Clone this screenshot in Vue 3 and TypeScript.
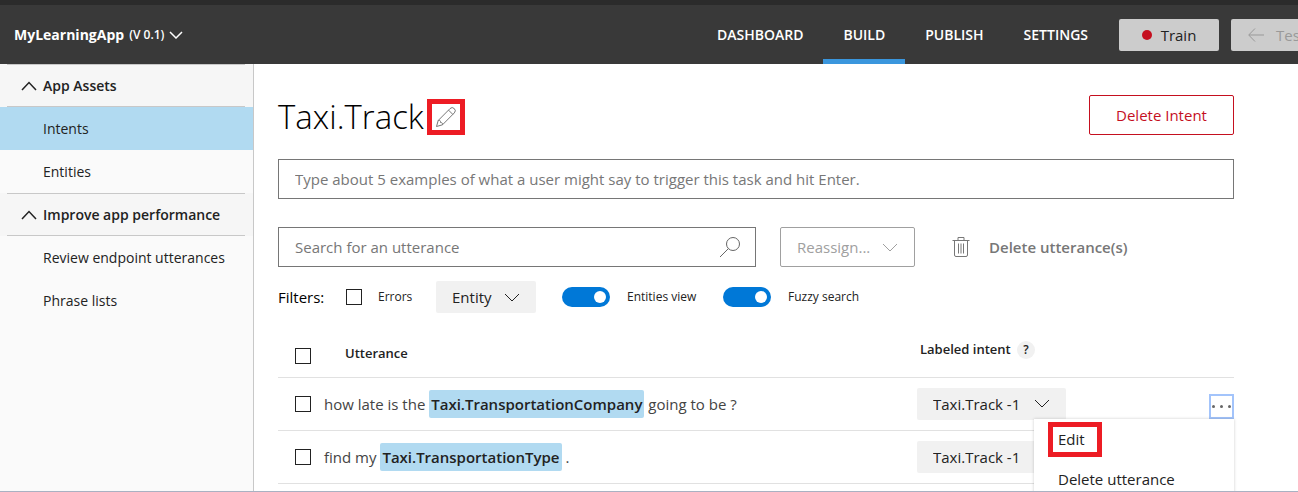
<script setup lang="ts">
import { ref } from 'vue'

interface NavLink { label: string; active?: boolean }
interface SideGroup { title: string; items: { label: string; active?: boolean }[] }
interface Utterance { before: string; entity: string; after: string; intent: string }

const navLinks: NavLink[] = [
  { label: 'DASHBOARD' },
  { label: 'BUILD', active: true },
  { label: 'PUBLISH' },
  { label: 'SETTINGS' },
]

const groups: SideGroup[] = [
  { title: 'App Assets', items: [{ label: 'Intents', active: true }, { label: 'Entities' }] },
  { title: 'Improve app performance', items: [{ label: 'Review endpoint utterances' }, { label: 'Phrase lists' }] },
]

const utterances: Utterance[] = [
  { before: 'how late is the', entity: 'Taxi.TransportationCompany', after: 'going to be ?', intent: 'Taxi.Track -1' },
  { before: 'find my', entity: 'Taxi.TransportationType', after: '.', intent: 'Taxi.Track -1' },
]

const entitiesView = ref(true)
const fuzzySearch = ref(true)
const openMenu = ref(0)
</script>

<template>
  <div class="page">
    <header class="topbar">
      <button class="app-name" type="button">
        <span>MyLearningApp</span>
        <small>(V 0.1)</small>
        <svg width="14" height="8" viewBox="0 0 14 8"><path d="M1 1l6 6 6-6" /></svg>
      </button>
      <nav class="tabs">
        <a v-for="link in navLinks" :key="link.label" href="#" :class="{ active: link.active }">{{ link.label }}</a>
      </nav>
      <button class="tool train" type="button"><i class="dot"></i>Train</button>
      <button class="tool test" type="button" disabled>
        <svg width="16" height="14" viewBox="0 0 16 14"><path d="M16 7H1M7 0.500L.7 7 7 13.500" /></svg>
        <span>Test</span>
      </button>
    </header>

    <div class="body">
      <aside class="sidebar">
        <section v-for="group in groups" :key="group.title">
          <h2>
            <button type="button">
              <svg width="16" height="10" viewBox="0 0 16 10"><path d="M1 9l7-7.500L15 9" /></svg>
              {{ group.title }}
            </button>
          </h2>
          <a v-for="item in group.items" :key="item.label" href="#" :class="{ active: item.active }">{{ item.label }}</a>
        </section>
      </aside>

      <main>
        <div class="title-row">
          <h1>Taxi.Track</h1>
          <button class="edit-title" type="button" aria-label="Rename intent">
            <svg width="22" height="22" viewBox="0 0 22 22">
              <path d="M1.500 20.500l1.700-6L15 2.600a3 3 0 0 1 4.300 4.300L7.500 18.800zM13.500 4.100l4.300 4.300M3.200 14.500c2-.3 2.500.5 2.300 2 1.500-.1 2.200.6 2 2.300" />
            </svg>
          </button>
          <button class="delete-intent" type="button">Delete Intent</button>
        </div>

        <input class="field new-utterance" type="text" aria-label="New utterance"
          placeholder="Type about 5 examples of what a user might say to trigger this task and hit Enter." />

        <div class="search-row">
          <label class="field search">
            <input type="text" aria-label="Search for an utterance" placeholder="Search for an utterance" />
            <svg width="22" height="22" viewBox="0 0 22 22"><circle cx="14" cy="8" r="6.500" /><path d="M9.400 12.600L1 21" /></svg>
          </label>
          <span class="dropdown reassign">
            <select aria-label="Reassign intent" disabled><option>Reassign...</option></select>
            <svg width="16" height="9" viewBox="0 0 16 9"><path d="M1 1l7 7 7-7" /></svg>
          </span>
          <button class="delete-utterances" type="button">
            <svg width="18" height="22" viewBox="0 0 18 22">
              <path d="M.5 4.500h17M6 4V1.500h6V4M2.500 5v14q0 1.500 1.500 1.500h10q1.500 0 1.500-1.500V5M6.500 7.500v10M9 7.500v10M11.500 7.500v10" />
            </svg>
            Delete utterance(s)
          </button>
        </div>

        <div class="filters">
          <span class="filters-title">Filters:</span>
          <label class="errors"><input class="box" type="checkbox" />Errors</label>
          <span class="dropdown entity">
            <select aria-label="Entity"><option>Entity</option></select>
            <svg width="16" height="9" viewBox="0 0 16 9"><path d="M1 1l7 7 7-7" /></svg>
          </span>
          <label class="switch"><input v-model="entitiesView" type="checkbox" />Entities view</label>
          <label class="switch"><input v-model="fuzzySearch" type="checkbox" />Fuzzy search</label>
        </div>

        <table>
          <thead>
            <tr>
              <th class="check"><input class="box" type="checkbox" aria-label="Select all utterances" /></th>
              <th class="utterance-head">Utterance</th>
              <th class="intent-head">Labeled intent <button class="help" type="button">?</button></th>
              <th class="more-col"></th>
            </tr>
          </thead>
          <tbody>
            <tr v-for="(row, i) in utterances" :key="row.entity">
              <td class="check"><input class="box" type="checkbox" :aria-label="'Select ' + row.entity" /></td>
              <td class="utterance">{{ row.before }} <mark>{{ row.entity }}</mark> {{ row.after }}</td>
              <td>
                <span class="dropdown intent">
                  <select aria-label="Labeled intent"><option>{{ row.intent }}</option></select>
                  <svg width="16" height="9" viewBox="0 0 16 9"><path d="M1 1l7 7 7-7" /></svg>
                </span>
              </td>
              <td class="more-cell">
                <div v-if="openMenu === i" class="more">
                  <button class="more-button" type="button" aria-label="More actions"><i></i><i></i><i></i></button>
                  <div class="menu">
                    <button class="menu-edit" type="button">Edit</button>
                    <button type="button">Delete utterance</button>
                  </div>
                </div>
              </td>
            </tr>
          </tbody>
        </table>
      </main>
    </div>
  </div>
</template>

<style>
body {
  margin: 0;
}
</style>

<style scoped>
* {
  box-sizing: border-box;
}

.page {
  display: flex;
  flex-direction: column;
  height: 100vh;
  overflow: hidden;
  border-bottom: 1px solid #a9b1c2;
  background: #fff;
  color: #222;
  font: 14px/20px "Open Sans", "Noto Sans", sans-serif;
}

button,
input,
select {
  margin: 0;
  padding: 0;
  border: 0;
  background: none;
  color: inherit;
  font: inherit;
}

a {
  color: inherit;
  text-decoration: none;
}

svg {
  flex: none;
  fill: none;
  stroke: currentColor;
}

.topbar {
  display: flex;
  flex: none;
  align-items: center;
  height: 64px;
  border-top: 5px solid #2b2b2b;
  background: #393939;
  color: #fff;
}

.app-name {
  display: flex;
  align-items: center;
  gap: 5px;
  margin-left: 14px;
  font-weight: 700;
}

.app-name small {
  font-size: 12px;
  font-weight: 600;
}

.app-name svg {
  stroke-width: 1.5;
}

.tabs {
  display: flex;
  align-self: stretch;
  margin-left: auto;
  margin-right: 11px;
  font-weight: 600;
}

.tabs a {
  padding: 20px 20px 0;
}

.tabs a.active {
  border-bottom: 5px solid #3a96dd;
}

.tool {
  display: flex;
  align-items: center;
  height: 32px;
  border-radius: 2px;
  background: #ccc;
  color: #222;
  font-size: 15px;
  white-space: nowrap;
}

.train {
  justify-content: center;
  gap: 9px;
  width: 100px;
  margin-right: 12px;
}

.dot {
  width: 10px;
  height: 10px;
  border-radius: 50%;
  background: #c50f1f;
}

.test {
  gap: 12px;
  width: 67px;
  padding-left: 17px;
  border-radius: 2px 0 0 2px;
  overflow: hidden;
  color: #999;
}

.body {
  display: flex;
  flex: 1;
  min-height: 0;
}

.sidebar {
  flex: none;
  width: 254px;
  border-right: 1px solid #c8c8c8;
  background: #fafafa;
}

.sidebar h2 {
  margin: 0;
  padding: 0 8px 0 7px;
  background: #f6f6f6;
  font: inherit;
}

.sidebar h2 button {
  display: flex;
  align-items: center;
  gap: 6px;
  width: 100%;
  height: 43px;
  padding-left: 14px;
  border-top: 1px solid #c8c8c8;
  border-bottom: 1px solid #c8c8c8;
  font-weight: 600;
}

.sidebar h2 svg {
  stroke-width: 1.5;
}

.sidebar a {
  display: block;
  padding: 12px 0 11px 43px;
}

.sidebar a.active {
  background: #b1daf1;
}

main {
  flex: 1;
  min-width: 0;
  padding: 31px 64px 0 24px;
}

.title-row {
  display: flex;
  align-items: flex-end;
  gap: 3px;
}

h1 {
  margin: 0;
  color: #000;
  font-size: 33px;
  font-weight: 300;
  line-height: 36px;
}

.edit-title {
  display: grid;
  place-items: center;
  width: 38px;
  height: 36px;
  border: 5px solid #ed1c24;
  color: #777;
}

.delete-intent {
  width: 145px;
  height: 40px;
  margin-left: auto;
  border: 1px solid #c50f1f;
  border-radius: 2px;
  color: #c50f1f;
  font-size: 15px;
  font-weight: 500;
}

.field {
  height: 40px;
  border: 1px solid #767676;
  padding: 0 14px 0 16px;
  font-size: 15px;
}

::placeholder {
  color: #777;
  opacity: 1;
}

.new-utterance {
  display: block;
  width: 100%;
  margin-top: 24px;
}

.search-row {
  display: flex;
  align-items: center;
  gap: 24px;
  margin-top: 28px;
}

.search {
  display: flex;
  align-items: center;
  width: 50%;
  color: #666;
}

.search input {
  flex: 1;
}

.dropdown {
  display: inline-grid;
  align-items: center;
  height: 32px;
  border-radius: 2px;
  background: #f1f1f1;
  font-size: 15px;
}

.dropdown select {
  grid-area: 1 / 1;
  align-self: stretch;
  width: 100%;
  padding-left: 16px;
  appearance: none;
  opacity: 1;
}

.dropdown svg {
  grid-area: 1 / 1;
  justify-self: end;
  margin-right: 16px;
  pointer-events: none;
}

.reassign {
  width: 135px;
  height: 40px;
  border: 1px solid #a0a0a0;
  background: #fff;
  color: #a0a0a0;
}

.delete-utterances {
  display: flex;
  align-items: center;
  gap: 19px;
  margin-left: 13px;
  color: #777;
  font-size: 15px;
  font-weight: 600;
}

.filters {
  display: flex;
  align-items: center;
  margin-top: 14px;
  font-size: 12px;
}

.filters-title {
  width: 68px;
  color: #000;
  font-size: 15px;
}

.errors {
  display: flex;
  align-items: center;
  gap: 16px;
  width: 90px;
}

.box {
  display: block;
  width: 16px;
  height: 16px;
  border: 1px solid #222;
  background: #fff;
  appearance: none;
}

.entity {
  width: 100px;
  margin-right: 26px;
}

.switch {
  display: flex;
  align-items: center;
  gap: 17px;
  width: 161px;
}

.switch input {
  width: 48px;
  height: 20px;
  border-radius: 10px;
  background: #999;
  appearance: none;
}

.switch input::before {
  content: "";
  display: block;
  width: 12px;
  height: 12px;
  margin: 4px;
  border-radius: 50%;
  background: #fff;
}

.switch input:checked {
  background: #0078d7;
}

.switch input:checked::before {
  margin-left: 32px;
}

table {
  width: 100%;
  margin-top: 16px;
  border-collapse: collapse;
  table-layout: fixed;
}

tr {
  height: 53px;
  border-bottom: 1px solid #e1e1e1;
}

thead tr {
  height: 48px;
}

th,
td {
  padding: 0;
  text-align: left;
}

th {
  font-size: 13px;
  font-weight: 600;
}

.check {
  width: 46px;
  padding-left: 17px;
}

th.check {
  padding-bottom: 13px;
  vertical-align: bottom;
}

.utterance-head {
  padding-left: 21px;
}

.intent-head {
  width: 292px;
  padding: 0 0 8px 3px;
}

.more-col {
  width: 25px;
}

.help {
  width: 18px;
  height: 18px;
  margin-left: 3px;
  border-radius: 50%;
  background: #f1f1f1;
  font-size: 12px;
  line-height: 18px;
}

.utterance {
  color: #444;
  font-size: 15px;
}

mark {
  display: inline-block;
  padding: 4px 2px;
  border-radius: 2px;
  background: #b1daf1;
  color: #222;
  font-weight: 600;
}

.intent {
  width: 149px;
}

td .dropdown {
  vertical-align: middle;
}

.more-cell {
  padding-bottom: 11px;
  vertical-align: bottom;
}

.more {
  position: relative;
}

.more-button {
  display: flex;
  align-items: center;
  justify-content: space-between;
  width: 25px;
  height: 25px;
  padding: 0 1px;
  border: 2px solid #a3c4fb;
}

.more-button i {
  width: 3px;
  height: 3px;
  border-radius: 50%;
  background: #666;
}

.menu {
  position: absolute;
  top: 25px;
  right: 0;
  z-index: 1;
  width: 200px;
  padding-top: 3px;
  background: #fff;
  box-shadow: 0 0 3px rgba(0, 0, 0, 0.2);
  font-size: 15px;
}

.menu button {
  display: block;
  height: 40px;
  padding-left: 24px;
  font-weight: 500;
}

.menu .menu-edit {
  height: 35px;
  margin: 0 0 2px 14px;
  padding: 0 12px 0 5px;
  border: 5px solid #ed1c24;
}
</style>
